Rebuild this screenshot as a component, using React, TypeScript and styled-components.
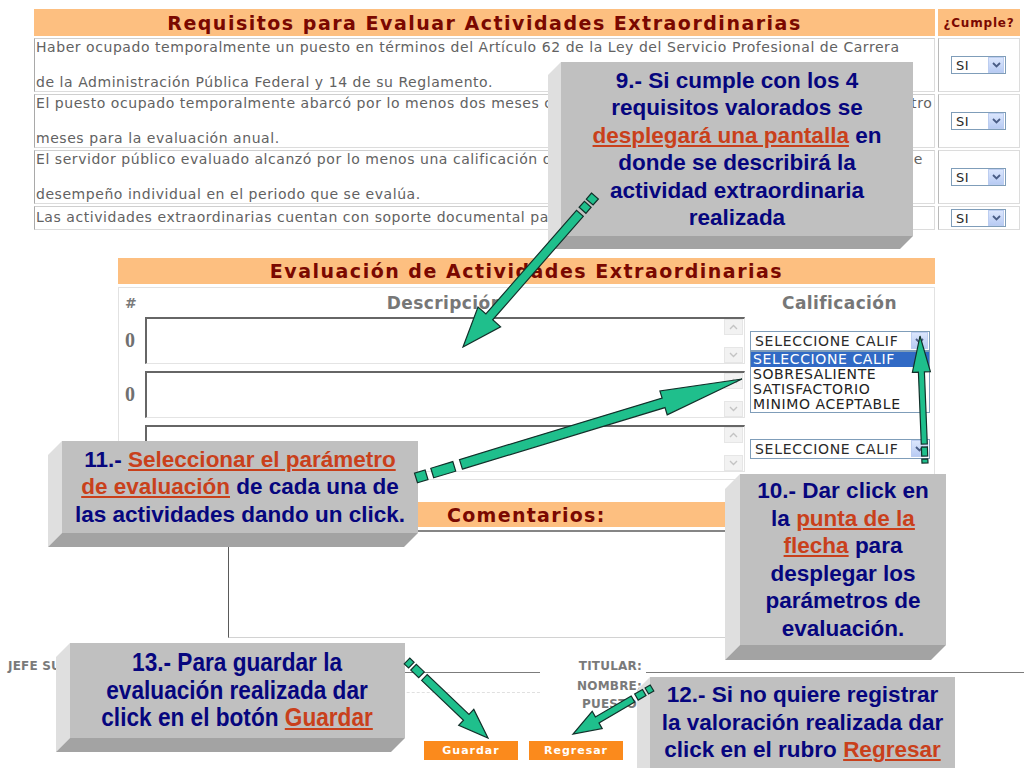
import React from "react";
import styled, { createGlobalStyle } from "styled-components";

const GlobalStyle = createGlobalStyle`
  html, body { margin: 0; padding: 0; background: #fff; }
  body { font-family: "DejaVu Sans", Verdana, sans-serif; }
  * { box-sizing: border-box; }
`;

const ORANGE = "#FDBF80";
const MAROON = "#7A0800";
const GREY_TEXT = "#626262";
const LABEL_GREY = "#7a7a7a";

const Page = styled.div`
  position: relative;
  width: 1024px;
  height: 768px;
  overflow: hidden;
  background: #fff;
  padding-top: 9px;
`;

/* ---------- Requisitos table ---------- */
const ReqTable = styled.div`
  margin-left: 34px;
  width: 986px;
  display: grid;
  grid-template-columns: 901px 82px;
  column-gap: 3px;
  row-gap: 2px;
`;

const HeadCell = styled.div<{ $small?: boolean }>`
  height: 27px;
  background: ${ORANGE};
  color: ${MAROON};
  font-weight: bold;
  font-size: ${(p) => (p.$small ? "12px" : "19px")};
  letter-spacing: ${(p) => (p.$small ? "0.8px" : "1.5px")};
  display: flex;
  align-items: center;
  justify-content: center;
  white-space: nowrap;
`;

const ReqCell = styled.div<{ $h: number; $pad?: number }>`
  height: ${(p) => p.$h}px;
  border: 1px solid #dcdcdc;
  border-left-color: #a9a9a9;
  border-top-color: #cfcfcf;
  padding: ${(p) => p.$pad ?? 0}px 1px 0 1px;
  font-size: 14px;
  letter-spacing: 0.55px;
  line-height: 17.5px;
  color: ${GREY_TEXT};
  white-space: nowrap;
  overflow: hidden;
`;

const CumpleCell = styled.div<{ $h: number }>`
  height: ${(p) => p.$h}px;
  border: 1px solid #dcdcdc;
  border-left-color: #b9b9b9;
  display: flex;
  align-items: center;
  padding-left: 12px;
`;

const SelectBox = styled.div<{ $w: number; $h: number; $fs: number; $ls: number }>`
  width: ${(p) => p.$w}px;
  height: ${(p) => p.$h}px;
  border: 1px solid #7f9db9;
  background: #fff;
  display: flex;
  align-items: center;
  justify-content: space-between;
  padding: 0 1px 0 4px;
  font-size: ${(p) => p.$fs}px;
  letter-spacing: ${(p) => p.$ls}px;
  color: #2a2a2a;
  white-space: nowrap;
`;

const DropBtn = styled.div<{ $s: number }>`
  width: ${(p) => p.$s}px;
  height: ${(p) => p.$s}px;
  background: linear-gradient(#dbe6fd, #b8cbf3);
  border: 1px solid #bccdf0;
  display: flex;
  align-items: center;
  justify-content: center;
`;

const Chevron = () => (
  <svg width="9" height="6" viewBox="0 0 9 6">
    <path d="M1 1 L4.5 4.5 L8 1" fill="none" stroke="#4a5d86" strokeWidth="1.8" />
  </svg>
);

/* ---------- Evaluación section ---------- */
const EvalSection = styled.section`
  margin: 28px 0 0 118px;
  width: 817px;
`;

const EvalHeader = styled.div`
  height: 26px;
  background: ${ORANGE};
  color: ${MAROON};
  font-weight: bold;
  font-size: 19px;
  letter-spacing: 1.5px;
  display: flex;
  align-items: center;
  justify-content: center;
  white-space: nowrap;
`;

const EvalBox = styled.div`
  margin-top: 3px;
  height: 193px;
  border: 1px solid #e2e2e2;
  display: flex;
  flex-direction: column;
`;

const EvalRow = styled.div<{ $h: number; $mb: number }>`
  height: ${(p) => p.$h}px;
  margin-bottom: ${(p) => p.$mb}px;
  display: grid;
  grid-template-columns: 26px 600px 1fr;
  align-items: center;
`;

const ColLabel = styled.div`
  font-weight: bold;
  font-size: 17px;
  letter-spacing: 0.4px;
  color: #777;
  text-align: center;
  white-space: nowrap;
`;

const HashLabel = styled.div`
  font-weight: bold;
  font-size: 14px;
  color: #7a7a7a;
  padding-left: 6px;
`;

const RowNum = styled.div`
  font-family: "Liberation Serif", "Times New Roman", serif;
  font-weight: bold;
  font-size: 20px;
  color: #707070;
  padding-left: 6px;
`;

const TextBox = styled.div`
  height: 47px;
  border-style: solid;
  border-width: 2px 1px 1px 2px;
  border-color: #666 #e4e4e4 #e4e4e4 #666;
  background: #fff;
  display: flex;
  justify-content: flex-end;
`;

const ScrollBar = styled.div`
  width: 20px;
  display: flex;
  flex-direction: column;
  justify-content: space-between;
  padding: 0 1px 0 0;
`;

const ScrollBtn = styled.div`
  height: 16px;
  background: #f2f2f2;
  border: 1px solid #e6e6e6;
  display: flex;
  align-items: center;
  justify-content: center;
`;

const ScrollChevron = ({ up }: { up?: boolean }) => (
  <svg width="9" height="6" viewBox="0 0 9 6">
    <path d={up ? "M1 5 L4.5 1.5 L8 5" : "M1 1 L4.5 4.5 L8 1"} fill="none" stroke="#c4c4c4" strokeWidth="1.4" />
  </svg>
);

const CalifCell = styled.div`
  padding-left: 5px;
  position: relative;
`;

const OptionList = styled.div`
  position: absolute;
  left: 5px;
  top: 20px;
  width: 180px;
  border: 1px solid #7f9db9;
  background: #fff;
  z-index: 2;
`;

const Option = styled.div<{ $sel?: boolean }>`
  height: 15px;
  line-height: 15px;
  padding-left: 2px;
  font-size: 14px;
  letter-spacing: 0.6px;
  color: ${(p) => (p.$sel ? "#fff" : "#222")};
  background: ${(p) => (p.$sel ? "#316ac5" : "#fff")};
  white-space: nowrap;
`;

/* ---------- Comentarios ---------- */
const CommentSection = styled.section`
  margin: 22px 0 0 118px;
  width: 817px;
`;

const CommentBar = styled.div`
  height: 25px;
  background: ${ORANGE};
  color: ${MAROON};
  font-weight: bold;
  font-size: 19px;
  letter-spacing: 1.3px;
  display: flex;
  align-items: center;
  padding-left: 329px;
`;

const DarkRule = styled.div`
  margin-top: 3px;
  height: 2px;
  background: #858585;
`;

const CommentBox = styled.div`
  margin-left: 110px;
  height: 106px;
  border-left: 1px solid #5a5a5a;
  border-bottom: 1px solid #d2d2d2;
`;

/* ---------- Signatures ---------- */
const SigRow = styled.div`
  display: flex;
  margin-top: 19px;
`;

const SigBlock = styled.div<{ $ml: number; $w: number }>`
  margin-left: ${(p) => p.$ml}px;
  width: ${(p) => p.$w}px;
  display: grid;
  grid-template-columns: max-content 1fr;
  grid-template-rows: 16px 20px 18px;
  column-gap: 4px;
`;

const SigLabel = styled.div`
  align-self: end;
  font-size: 12px;
  letter-spacing: 0.2px;
  line-height: 14px;
  font-weight: bold;
  color: ${LABEL_GREY};
  text-align: right;
  white-space: nowrap;
`;

const SigLine = styled.div<{ $kind: "solid" | "dashed" | "none" }>`
  border-bottom: ${(p) =>
    p.$kind === "solid" ? "1px solid #7c7c7c" : p.$kind === "dashed" ? "1px dashed #e0e0e0" : "none"};
`;

const ButtonRow = styled.div`
  display: flex;
  gap: 11px;
  margin-top: 30px;
  padding-left: 424px;
`;

const OrangeButton = styled.button`
  width: 94px;
  height: 19px;
  border: none;
  padding: 0;
  background: #fb8a1c;
  color: #fff;
  font-family: "DejaVu Sans", Verdana, sans-serif;
  font-weight: bold;
  font-size: 11px;
  letter-spacing: 1px;
`;

/* ---------- Callouts ---------- */
const CalloutBox = styled.div<{ $x: number; $y: number; $w: number; $h: number; $d: number }>`
  position: absolute;
  left: ${(p) => p.$x - p.$d}px;
  top: ${(p) => p.$y}px;
  width: ${(p) => p.$w + p.$d}px;
  height: ${(p) => p.$h + p.$d}px;
  z-index: 5;
  &::before {
    content: "";
    position: absolute;
    inset: 0;
    background: #dfdfdf;
    clip-path: polygon(${(p) => p.$d}px 0, 0 ${(p) => p.$d}px, 0 100%, ${(p) => p.$d}px calc(100% - ${(p) => p.$d}px));
  }
  &::after {
    content: "";
    position: absolute;
    inset: 0;
    background: #a3a3a3;
    clip-path: polygon(
      ${(p) => p.$d}px calc(100% - ${(p) => p.$d}px),
      100% calc(100% - ${(p) => p.$d}px),
      calc(100% - ${(p) => p.$d}px) 100%,
      0 100%
    );
  }
`;

const Face = styled.div<{ $d: number }>`
  position: absolute;
  left: ${(p) => p.$d}px;
  top: 0;
  right: 0;
  bottom: ${(p) => p.$d}px;
  background: #c0c0c0;
  display: flex;
  align-items: center;
  justify-content: center;
`;

const TextStack = styled.div<{ $narrow?: boolean }>`
  display: flex;
  flex-direction: column;
  align-items: center;
  text-align: center;
  font-family: "Liberation Sans", Arial, sans-serif;
  font-weight: bold;
  font-size: ${(p) => (p.$narrow ? "26px" : "22.5px")};
  line-height: 27.5px;
  color: #06067e;
  white-space: nowrap;
  transform: ${(p) => (p.$narrow ? "scaleX(0.87)" : "none")};
`;

const Hl = styled.span`
  color: #c9401b;
  text-decoration: underline;
  text-decoration-thickness: 2px;
  text-underline-offset: 2px;
`;

type CalloutProps = {
  x: number;
  y: number;
  w: number;
  h: number;
  d: number;
  narrow?: boolean;
  children: React.ReactNode;
};

const Callout = ({ x, y, w, h, d, narrow, children }: CalloutProps) => (
  <CalloutBox $x={x} $y={y} $w={w} $h={h} $d={d}>
    <Face $d={d}>
      <TextStack $narrow={narrow}>{children}</TextStack>
    </Face>
  </CalloutBox>
);

/* ---------- Arrows ---------- */
const ArrowLayer = styled.svg`
  position: absolute;
  left: 0;
  top: 0;
  width: 1024px;
  height: 768px;
  pointer-events: none;
  z-index: 10;
`;

type Pt = [number, number];
type ArrowSpec = {
  t: Pt;
  p: Pt;
  sw: number;
  hw: number;
  hl: number;
  dashes: [number, number][];
  start: number;
};

function arrowPolys(a: ArrowSpec): string[] {
  const dx = a.p[0] - a.t[0];
  const dy = a.p[1] - a.t[1];
  const len = Math.hypot(dx, dy);
  const ux = dx / len;
  const uy = dy / len;
  const nx = -uy;
  const ny = ux;
  const at = (s: number, o: number) =>
    `${(a.t[0] + ux * s + nx * o).toFixed(1)},${(a.t[1] + uy * s + ny * o).toFixed(1)}`;
  const polys = a.dashes.map(([s0, s1]) =>
    [at(s0, a.sw / 2), at(s1, a.sw / 2), at(s1, -a.sw / 2), at(s0, -a.sw / 2)].join(" ")
  );
  const b = len - a.hl;
  polys.push(
    [
      at(a.start, a.sw / 2),
      at(b, a.sw / 2),
      at(b, a.hw / 2),
      at(len, 0),
      at(b, -a.hw / 2),
      at(b, -a.sw / 2),
      at(a.start, -a.sw / 2),
    ].join(" ")
  );
  return polys;
}

const arrows: ArrowSpec[] = [
  { t: [595, 196], p: [463, 347], sw: 9, hw: 30, hl: 40, dashes: [[0, 8], [11, 19]], start: 23 },
  { t: [416, 478], p: [742, 379], sw: 10, hw: 25, hl: 82, dashes: [[0, 11], [17, 40]], start: 47 },
  { t: [925, 463], p: [920, 336], sw: 6, hw: 18, hl: 36, dashes: [[0, 4], [7, 16]], start: 19 },
  { t: [407, 661], p: [488, 738], sw: 8, hw: 22, hl: 30, dashes: [[0, 6], [9, 20]], start: 24 },
  { t: [652, 688], p: [573, 734], sw: 7, hw: 20, hl: 28, dashes: [[0, 6], [9, 18]], start: 22 },
];

export default function App() {
  const califOptions = ["SELECCIONE CALIF", "SOBRESALIENTE", "SATISFACTORIO", "MINIMO ACEPTABLE"];
  const reqRows: { h: number; pad?: number; lines: string[] }[] = [
    {
      h: 54,
      lines: [
        "Haber ocupado temporalmente un puesto en términos del Artículo 62 de la Ley del Servicio Profesional de Carrera",
        "de la Administración Pública Federal y 14 de su Reglamento.",
      ],
    },
    {
      h: 54,
      lines: [
        "El puesto ocupado temporalmente abarcó por lo menos dos meses continuos o discontinuos de un total de diez dentro",
        "meses para la evaluación anual.",
      ],
    },
    {
      h: 54,
      lines: [
        "El servidor público evaluado alcanzó por lo menos una calificación de Satisfactorio o superior en sus evaluaciones de",
        "desempeño individual en el periodo que se evalúa.",
      ],
    },
    {
      h: 24,
      pad: 2,
      lines: ["Las actividades extraordinarias cuentan con soporte documental para su evaluación."],
    },
  ];

  return (
    <Page>
      <GlobalStyle />

      <ReqTable>
        <HeadCell>Requisitos para Evaluar Actividades Extraordinarias</HeadCell>
        <HeadCell $small>¿Cumple?</HeadCell>
        {reqRows.map((r, i) => (
          <React.Fragment key={i}>
            <ReqCell $h={r.h} $pad={r.pad}>
              {r.lines[0]}
              {r.lines[1] && (
                <>
                  <br />
                  <br />
                  {r.lines[1]}
                </>
              )}
            </ReqCell>
            <CumpleCell $h={r.h}>
              <SelectBox $w={55} $h={18} $fs={13} $ls={0.5}>
                SI
                <DropBtn $s={16}>
                  <Chevron />
                </DropBtn>
              </SelectBox>
            </CumpleCell>
          </React.Fragment>
        ))}
      </ReqTable>

      <EvalSection>
        <EvalHeader>Evaluación de Actividades Extraordinarias</EvalHeader>
        <EvalBox>
          <EvalRow $h={29} $mb={0}>
            <HashLabel>#</HashLabel>
            <ColLabel>Descripción</ColLabel>
            <ColLabel>Calificación</ColLabel>
          </EvalRow>
          {[0, 1, 2].map((i) => (
            <EvalRow key={i} $h={47} $mb={7}>
              <RowNum>0</RowNum>
              <TextBox>
                <ScrollBar>
                  <ScrollBtn>
                    <ScrollChevron up />
                  </ScrollBtn>
                  <ScrollBtn>
                    <ScrollChevron />
                  </ScrollBtn>
                </ScrollBar>
              </TextBox>
              <CalifCell>
                {i !== 1 && (
                  <SelectBox $w={180} $h={20} $fs={14} $ls={0.7}>
                    SELECCIONE CALIF
                    <DropBtn $s={17}>
                      <Chevron />
                    </DropBtn>
                  </SelectBox>
                )}
                {i === 0 && (
                  <OptionList>
                    {califOptions.map((o, k) => (
                      <Option key={o} $sel={k === 0}>
                        {o}
                      </Option>
                    ))}
                  </OptionList>
                )}
              </CalifCell>
            </EvalRow>
          ))}
        </EvalBox>
      </EvalSection>

      <CommentSection>
        <CommentBar>Comentarios:</CommentBar>
        <DarkRule />
        <CommentBox />
      </CommentSection>

      <SigRow>
        <SigBlock $ml={8} $w={532}>
          <SigLabel>JEFE SUPERIOR:</SigLabel>
          <SigLine $kind="solid" />
          <SigLabel />
          <SigLine $kind="dashed" />
          <SigLabel />
          <SigLine $kind="none" />
        </SigBlock>
        <SigBlock $ml={37} $w={447}>
          <SigLabel>TITULAR:</SigLabel>
          <SigLine $kind="solid" />
          <SigLabel>NOMBRE:</SigLabel>
          <SigLine $kind="none" />
          <SigLabel>PUESTO:</SigLabel>
          <SigLine $kind="none" />
        </SigBlock>
      </SigRow>

      <ButtonRow>
        <OrangeButton>Guardar</OrangeButton>
        <OrangeButton>Regresar</OrangeButton>
      </ButtonRow>

      <Callout x={561} y={62} w={352} h={174} d={13}>
        <div>9.- Si cumple con los 4</div>
        <div>requisitos valorados se</div>
        <div>
          <Hl>desplegará una pantalla</Hl> en
        </div>
        <div>donde se describirá la</div>
        <div>actividad extraordinaria</div>
        <div>realizada</div>
      </Callout>

      <Callout x={62} y={441} w={356} h={92} d={14}>
        <div>
          11.- <Hl>Seleccionar el parámetro</Hl>
        </div>
        <div>
          <Hl>de evaluación</Hl> de cada una de
        </div>
        <div>las actividades dando un click.</div>
      </Callout>

      <Callout x={740} y={474} w={206} h={171} d={15}>
        <div>10.- Dar click en</div>
        <div>
          la <Hl>punta de la</Hl>
        </div>
        <div>
          <Hl>flecha</Hl> para
        </div>
        <div>desplegar los</div>
        <div>parámetros de</div>
        <div>evaluación.</div>
      </Callout>

      <Callout x={70} y={643} w={335} h={95} d={14} narrow>
        <div>13.- Para guardar la</div>
        <div>evaluación realizada dar</div>
        <div>
          click en el botón <Hl>Guardar</Hl>
        </div>
      </Callout>

      <Callout x={650} y={677} w={305} h={91} d={13}>
        <div>12.- Si no quiere registrar</div>
        <div>la valoración realizada dar</div>
        <div>
          click en el rubro <Hl>Regresar</Hl>
        </div>
      </Callout>

      <ArrowLayer viewBox="0 0 1024 768">
        {arrows.map((a, i) =>
          arrowPolys(a).map((pts, j) => (
            <polygon key={`${i}-${j}`} points={pts} fill="#1fbf8c" stroke="#12302a" strokeWidth="1.2" strokeLinejoin="miter" />
          ))
        )}
      </ArrowLayer>
    </Page>
  );
}
